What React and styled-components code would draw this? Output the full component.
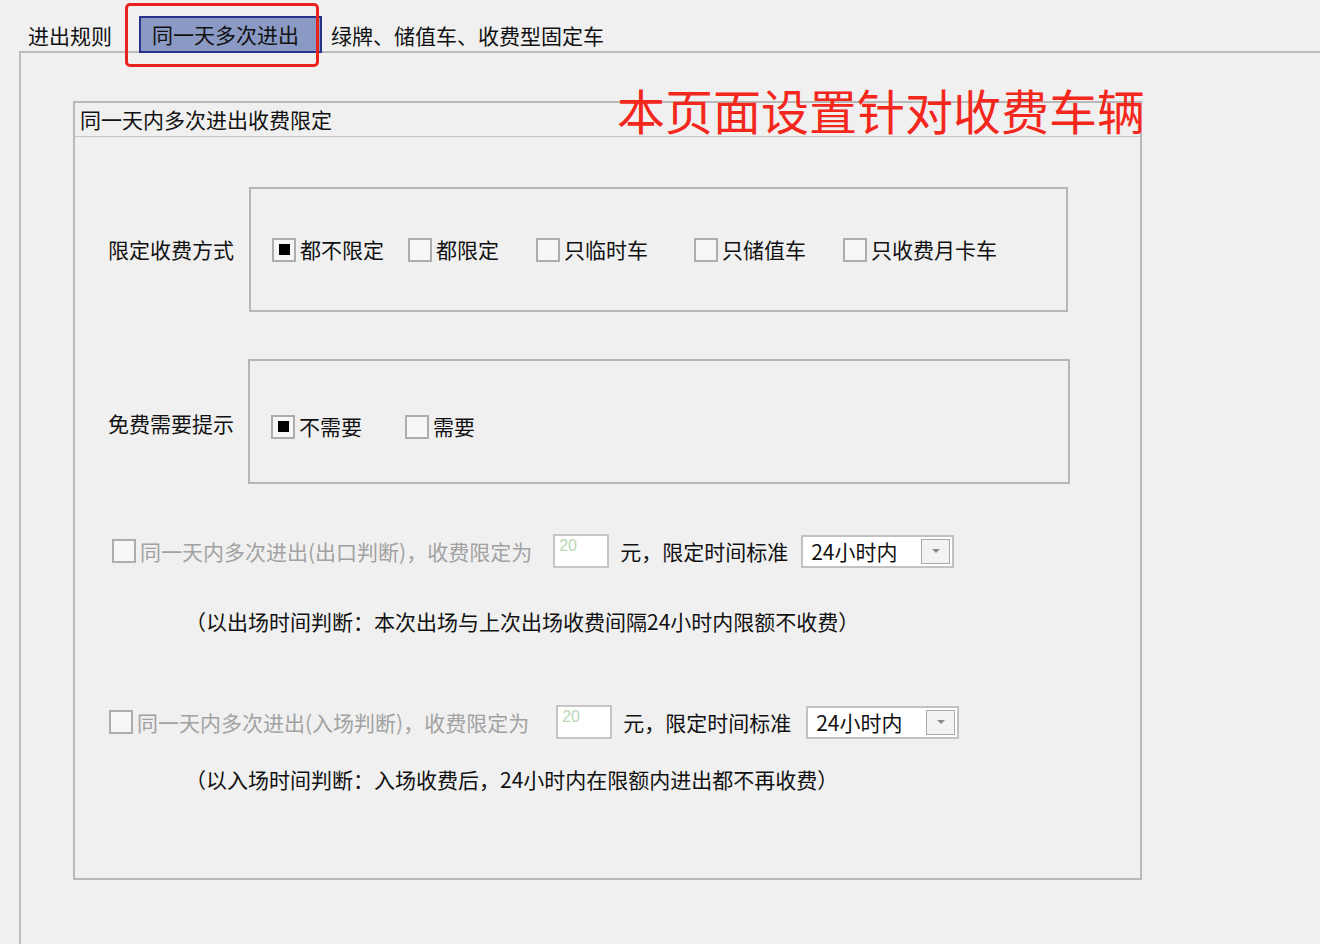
import React from "react";
import styled, { createGlobalStyle } from "styled-components";

const Global = createGlobalStyle`
  html, body { margin: 0; padding: 0; background: #f0f0f0; }
  body { font-family: "Noto Sans CJK SC", "Noto Sans", sans-serif; color: #111; }
  * { box-sizing: border-box; }
`;

const Page = styled.div`
  position: relative;
  width: 1320px;
  height: 944px;
  overflow: hidden;
  background: #f0f0f0;
  font-size: 21px;
  display: flex;
  flex-direction: column;
`;

const TabBar = styled.div`
  display: flex;
  align-items: flex-end;
  height: 53px;
  padding-left: 19px;
  position: relative;
  z-index: 1;
`;

const Tab = styled.div`
  display: flex;
  align-items: center;
  height: ${(p) => (p.$active ? "37px" : "36px")};
  width: ${(p) => (p.$w ? `${p.$w}px` : "auto")};
  padding: 0 9px 0 ${(p) => (p.$active ? "11px" : "9px")};
  margin-left: ${(p) => p.$ml || 0}px;
  background: ${(p) => (p.$active ? "#8a9ac4" : "transparent")};
  border: ${(p) => (p.$active ? "2px solid #27338a" : "none")};
  line-height: 1;
  white-space: nowrap;
  color: #111;
`;

const Highlight = styled.div`
  position: absolute;
  left: 125px;
  top: 3px;
  width: 194px;
  height: 64px;
  border: 3px solid #e8231f;
  border-radius: 5px;
  pointer-events: none;
  z-index: 2;
`;

const Annotation = styled.div`
  position: absolute;
  left: 617px;
  top: 78px;
  font-size: 48px;
  line-height: 62px;
  color: #f4271d;
  white-space: nowrap;
  z-index: 2;
`;

const Panel = styled.div`
  flex: 1;
  margin-left: 19px;
  margin-top: -2px;
  border-top: 2px solid #bcbcbc;
  border-left: 2px solid #bcbcbc;
  padding: 48px 0 0 52px;
`;

const Group = styled.div`
  width: 1069px;
  height: 779px;
  border: 2px solid #b8b8b8;
  display: flex;
  flex-direction: column;
`;

const GroupHeader = styled.div`
  height: 34px;
  border-bottom: 1px solid #c4c4c4;
  padding-left: 5px;
  display: flex;
  align-items: center;
  line-height: 1;
`;

const GroupBody = styled.div`
  padding: 50px 0 0 33px;
  display: flex;
  flex-direction: column;
`;

const SectionRow = styled.div`
  display: flex;
  align-items: center;
  margin-bottom: 47px;
`;

const SectionLabel = styled.div`
  width: ${(p) => p.$w}px;
  line-height: 1;
  white-space: nowrap;
  padding-top: ${(p) => p.$pt || 0}px;
`;

const OptionBox = styled.div`
  width: ${(p) => p.$w}px;
  height: 125px;
  border: 2px solid #b6b6b6;
  display: flex;
  align-items: center;
  padding: ${(p) => p.$pt || 0}px 0 0 21px;
`;

const Option = styled.label`
  display: flex;
  align-items: center;
  width: ${(p) => (p.$w ? `${p.$w}px` : "auto")};
  line-height: 1;
  white-space: nowrap;
  color: ${(p) => (p.$disabled ? "#a2a2a2" : "#111")};
`;

const Box = styled.span`
  width: 24px;
  height: 24px;
  border: 2px solid #adadad;
  background: #f6f6f6;
  display: flex;
  align-items: center;
  justify-content: center;
  margin-right: 4px;
  flex: none;
`;

const Mark = styled.span`
  width: 11px;
  height: 11px;
  background: #000;
`;

const LimitRow = styled.div`
  display: flex;
  align-items: center;
  height: 34px;
  margin-left: ${(p) => p.$ml}px;
  margin-top: ${(p) => p.$mt}px;
`;

const NumInput = styled.div`
  width: 56px;
  height: 34px;
  margin-left: ${(p) => p.$ml}px;
  background: #fff;
  border: 2px solid #c6c6c6;
  font-family: "Liberation Sans", Arial, sans-serif;
  font-size: 16px;
  color: #b9d6b5;
  padding: 2px 0 0 4px;
  line-height: 1;
`;

const Text = styled.span`
  margin-left: ${(p) => p.$ml || 0}px;
  line-height: 1;
  white-space: nowrap;
`;

const Select = styled.div`
  width: 153px;
  height: 33px;
  margin-left: ${(p) => p.$ml}px;
  background: #fff;
  border: 2px solid #c2c2c2;
  display: flex;
  align-items: center;
  justify-content: space-between;
  padding: 0 2px 0 8px;
  line-height: 1;
`;

const DropBtn = styled.span`
  width: 29px;
  height: 25px;
  border: 1px solid #a9a9a9;
  background: #f3f3f3;
  display: flex;
  align-items: center;
  justify-content: center;
`;

const Note = styled.div`
  margin-left: 77px;
  margin-top: ${(p) => p.$mt}px;
  height: 30px;
  display: flex;
  align-items: center;
  line-height: 1;
  white-space: nowrap;
`;

function Check({ checked, disabled, label, w }) {
  return (
    <Option $w={w} $disabled={disabled}>
      <Box>{checked && <Mark />}</Box>
      {label}
    </Option>
  );
}

function Arrow() {
  return (
    <DropBtn>
      <svg width="10" height="6" viewBox="0 0 10 6">
        <path d="M1 1 L9 1 L5 5 Z" fill="#8a8a8a" />
      </svg>
    </DropBtn>
  );
}

function Limit({ text, ml, mt, inputMl, textMl, selectMl }) {
  return (
    <LimitRow $ml={ml} $mt={mt}>
      <Check disabled label={text} />
      <NumInput $ml={inputMl}>20</NumInput>
      <Text $ml={textMl}>元，限定时间标准</Text>
      <Select $ml={selectMl}>
        <span>24小时内</span>
        <Arrow />
      </Select>
    </LimitRow>
  );
}

export default function App() {
  const modes = [
    { label: "都不限定", w: 136, checked: true },
    { label: "都限定", w: 128 },
    { label: "只临时车", w: 158 },
    { label: "只储值车", w: 149 },
    { label: "只收费月卡车" },
  ];
  return (
    <Page>
      <Global />
      <Highlight />
      <Annotation>本页面设置针对收费车辆</Annotation>
      <TabBar>
        <Tab>进出规则</Tab>
        <Tab $active $ml={18} $w={183}>同一天多次进出</Tab>
        <Tab>绿牌、储值车、收费型固定车</Tab>
      </TabBar>
      <Panel>
        <Group>
          <GroupHeader>同一天内多次进出收费限定</GroupHeader>
          <GroupBody>
            <SectionRow>
              <SectionLabel $w={141}>限定收费方式</SectionLabel>
              <OptionBox $w={819}>
                {modes.map((m) => (
                  <Check key={m.label} label={m.label} w={m.w} checked={m.checked} />
                ))}
              </OptionBox>
            </SectionRow>
            <SectionRow>
              <SectionLabel $w={140} $pt={4}>免费需要提示</SectionLabel>
              <OptionBox $w={822} $pt={10}>
                <Check label="不需要" w={134} checked />
                <Check label="需要" />
              </OptionBox>
            </SectionRow>
            <Limit
              text="同一天内多次进出(出口判断)，收费限定为"
              ml={4}
              mt={3}
              inputMl={21}
              textMl={11}
              selectMl={13}
            />
            <Note $mt={38}>（以出场时间判断：本次出场与上次出场收费间隔24小时内限额不收费）</Note>
            <Limit
              text="同一天内多次进出(入场判断)，收费限定为"
              ml={1}
              mt={69}
              inputMl={27}
              textMl={11}
              selectMl={15}
            />
            <Note $mt={25}>（以入场时间判断：入场收费后，24小时内在限额内进出都不再收费）</Note>
          </GroupBody>
        </Group>
      </Panel>
    </Page>
  );
}
